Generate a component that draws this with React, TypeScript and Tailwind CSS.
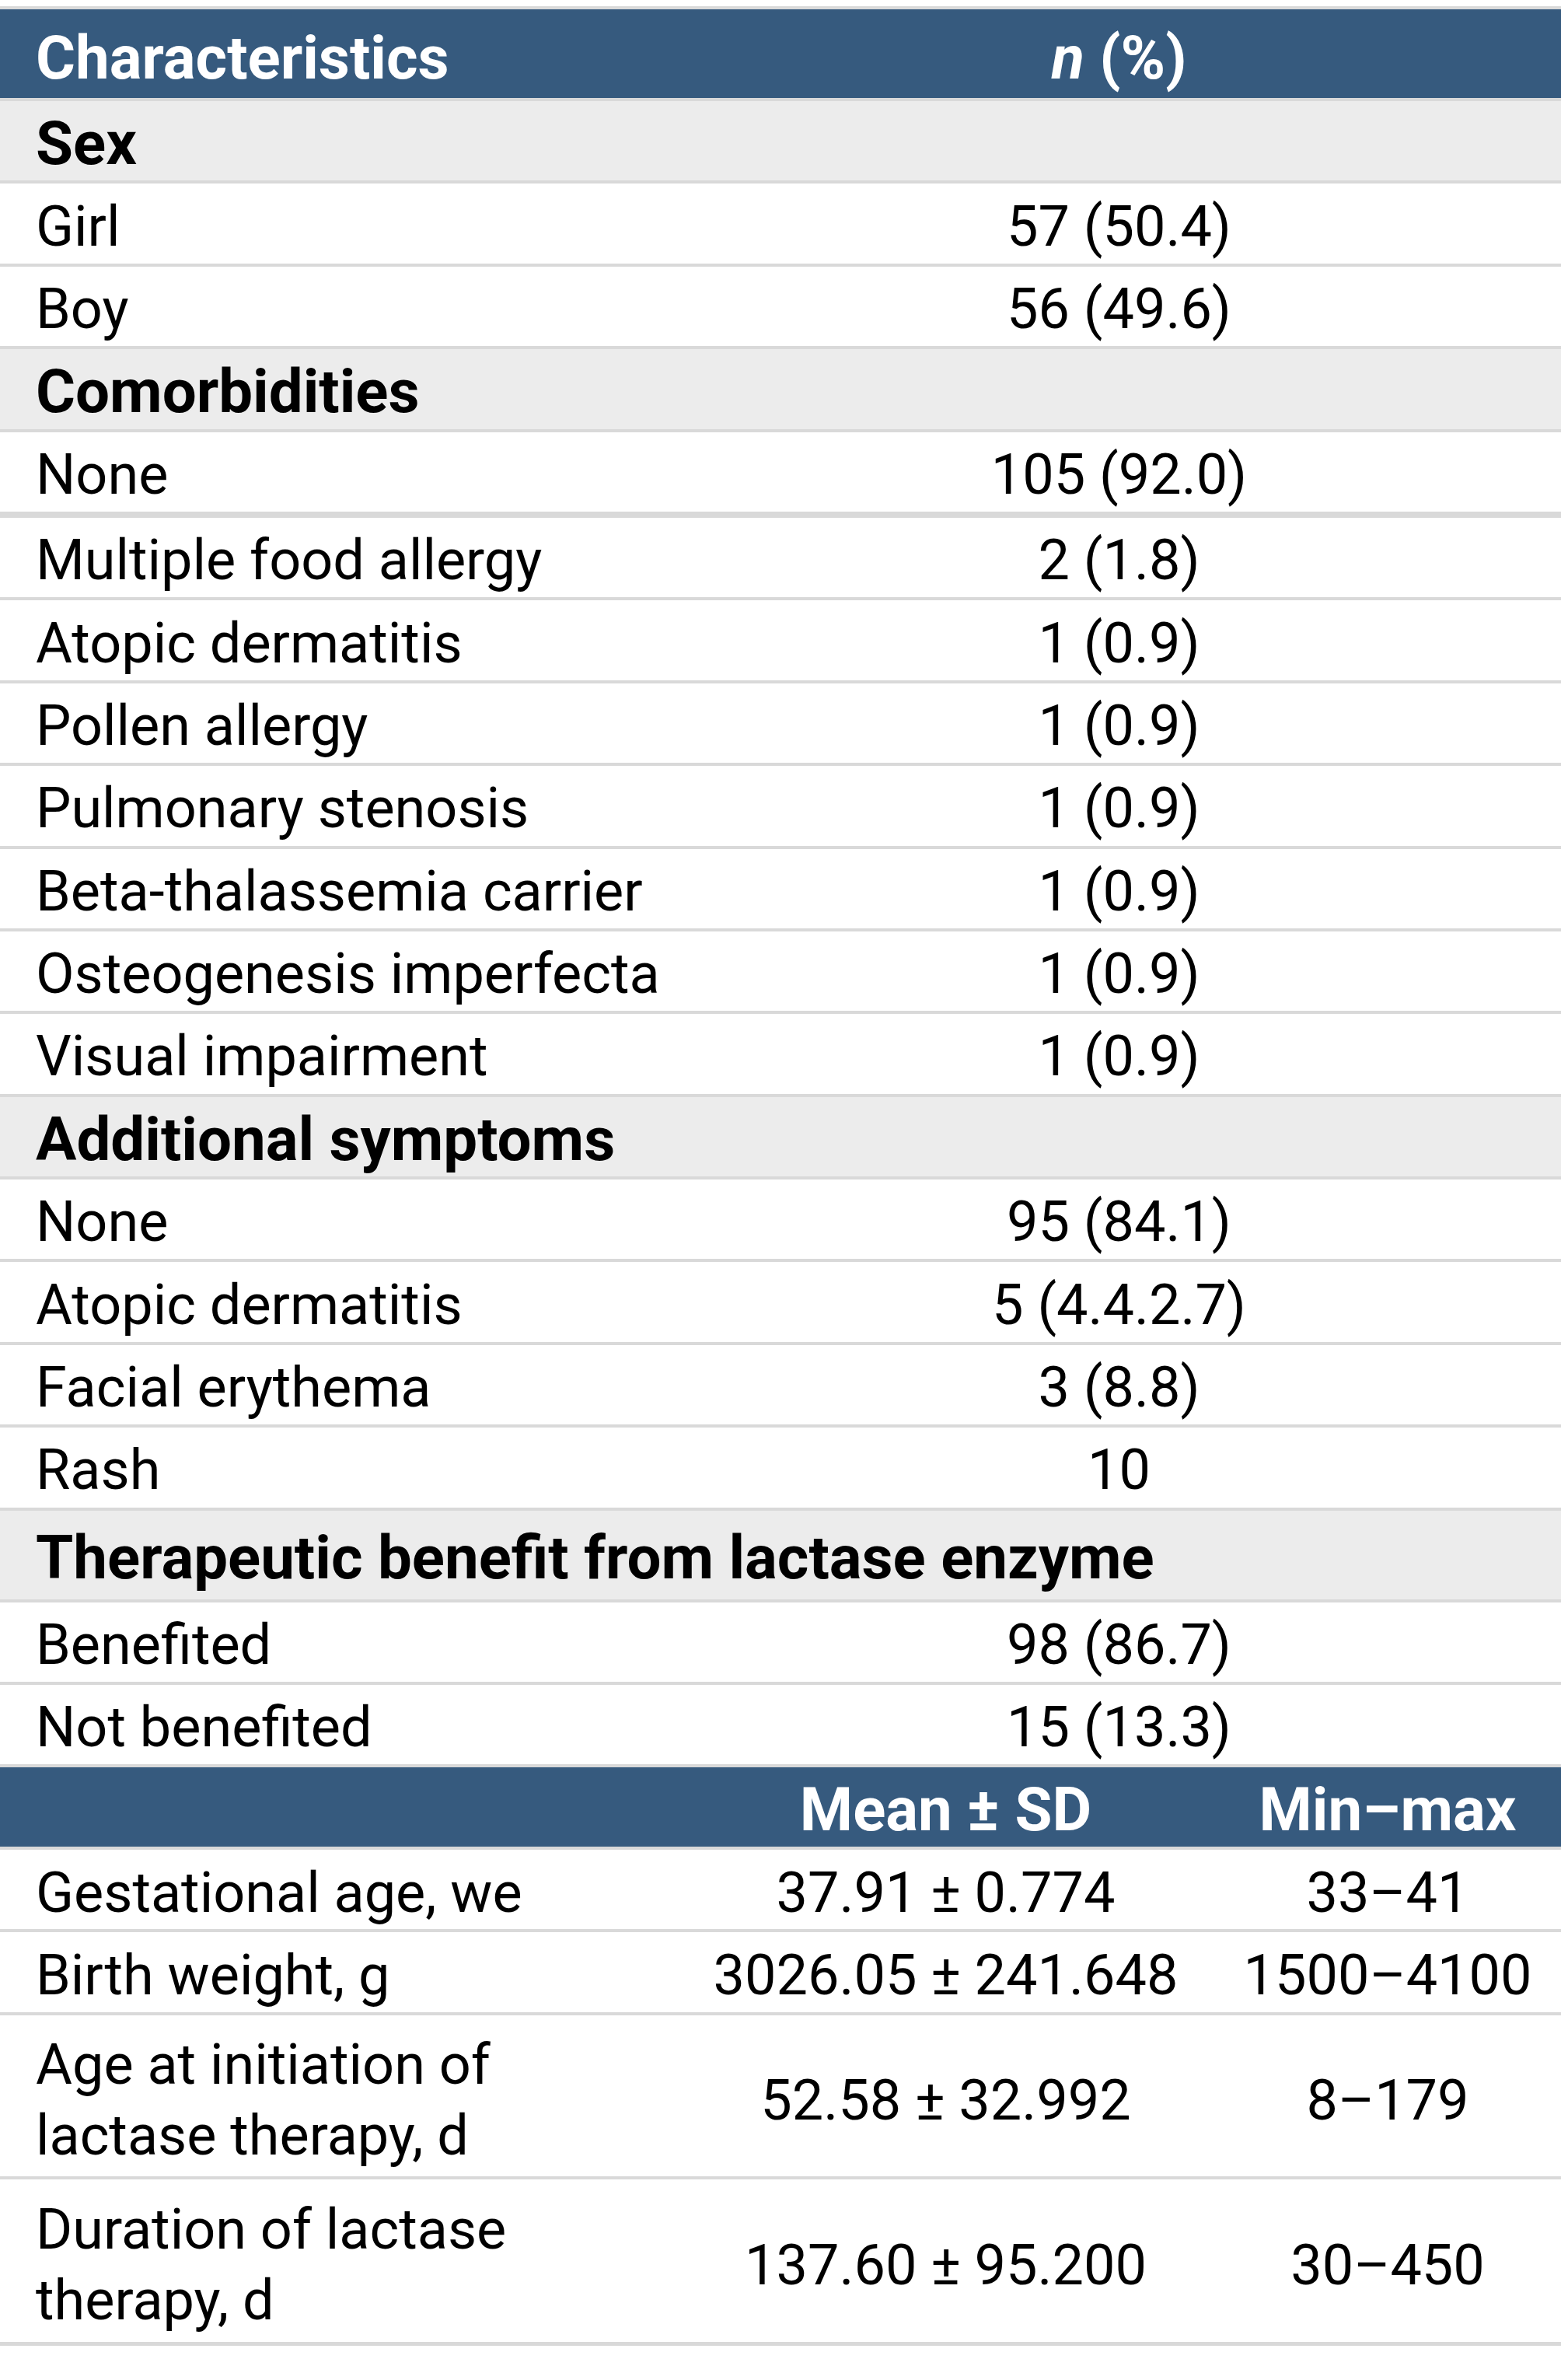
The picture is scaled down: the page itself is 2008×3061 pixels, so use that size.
type Row =
  | { kind: "section"; label: string; tall?: boolean }
  | { kind: "item"; label: string; value: string; thick?: boolean };

const characteristics: Row[] = [
  { kind: "section", label: "Sex" },
  { kind: "item", label: "Girl", value: "57 (50.4)" },
  { kind: "item", label: "Boy", value: "56 (49.6)" },
  { kind: "section", label: "Comorbidities" },
  { kind: "item", label: "None", value: "105 (92.0)", thick: true },
  { kind: "item", label: "Multiple food allergy", value: "2 (1.8)" },
  { kind: "item", label: "Atopic dermatitis", value: "1 (0.9)" },
  { kind: "item", label: "Pollen allergy", value: "1 (0.9)" },
  { kind: "item", label: "Pulmonary stenosis", value: "1 (0.9)" },
  { kind: "item", label: "Beta-thalassemia carrier", value: "1 (0.9)" },
  { kind: "item", label: "Osteogenesis imperfecta", value: "1 (0.9)" },
  { kind: "item", label: "Visual impairment", value: "1 (0.9)" },
  { kind: "section", label: "Additional symptoms" },
  { kind: "item", label: "None", value: "95 (84.1)" },
  { kind: "item", label: "Atopic dermatitis", value: "5 (4.4.2.7)" },
  { kind: "item", label: "Facial erythema", value: "3 (8.8)" },
  { kind: "item", label: "Rash", value: "10" },
  { kind: "section", label: "Therapeutic benefit from lactase enzyme", tall: true },
  { kind: "item", label: "Benefited", value: "98 (86.7)" },
  { kind: "item", label: "Not benefited", value: "15 (13.3)" },
];

const stats = [
  { label: "Gestational age, we", mean: "37.91 ± 0.774", range: "33–41", h: "h-[106.4px] border-b-4 pt-[8px]" },
  { label: "Birth weight, g", mean: "3026.05 ± 241.648", range: "1500–4100", h: "h-[106.4px] border-b-4 pt-[8px]" },
  { label: "Age at initiation of lactase therapy, d", mean: "52.58 ± 32.992", range: "8–179", h: "h-[211px] border-b-4 pt-[12px]" },
  { label: "Duration of lactase therapy, d", mean: "137.60 ± 95.200", range: "30–450", h: "h-[214px] border-b-[5px] pt-[12px]" },
];

export default function App() {
  return (
    <div className="w-[2008px] bg-white pt-[8px] font-[Roboto,sans-serif] text-black">
      <div className="border-t-4 border-[#d9d9d9]">
        {/* first table */}
        <div className="grid grid-cols-[871px_1fr] h-[118px] items-center border-b-4 border-[#d9d9d9] bg-[#365a7e] pt-[12px] text-[78px] font-bold text-white leading-none">
          <div className="pl-[46px]">Characteristics</div>
          <div className="text-center">
            <span className="italic">n</span> (%)
          </div>
        </div>

        {characteristics.map((r, i) =>
          r.kind === "section" ? (
            <div
              key={i}
              className={`flex items-center border-b-4 border-[#d9d9d9] bg-[#ececec] pl-[46px] pt-[8px] text-[78px] font-bold leading-none ${
                r.tall ? "h-[118px]" : "h-[106.4px]"
              }`}
            >
              {r.label}
            </div>
          ) : (
            <div
              key={i}
              className={`grid grid-cols-[871px_1fr] items-center border-[#d9d9d9] pt-[8px] text-[72px] leading-none ${
                r.thick ? "h-[110.4px] border-b-8" : "h-[106.4px] border-b-4"
              }`}
            >
              <div className="pl-[46px]">{r.label}</div>
              <div className="text-center">{r.value}</div>
            </div>
          ),
        )}

        {/* second table */}
        <div className="grid grid-cols-[871px_691px_1fr] h-[105.4px] items-center border-b-4 border-[#d9d9d9] bg-[#365a7e] pt-[8px] text-[78px] font-bold text-white leading-none">
          <div />
          <div className="text-center">Mean ± SD</div>
          <div className="text-center">Min–max</div>
        </div>

        {stats.map((s) => (
          <div
            key={s.label}
            className={`grid grid-cols-[871px_691px_1fr] items-center border-[#d9d9d9] text-[72px] leading-[91px] ${s.h}`}
          >
            <div className="pl-[46px] pr-[10px]">{s.label}</div>
            <div className="text-center">{s.mean}</div>
            <div className="text-center">{s.range}</div>
          </div>
        ))}
      </div>
    </div>
  );
}
